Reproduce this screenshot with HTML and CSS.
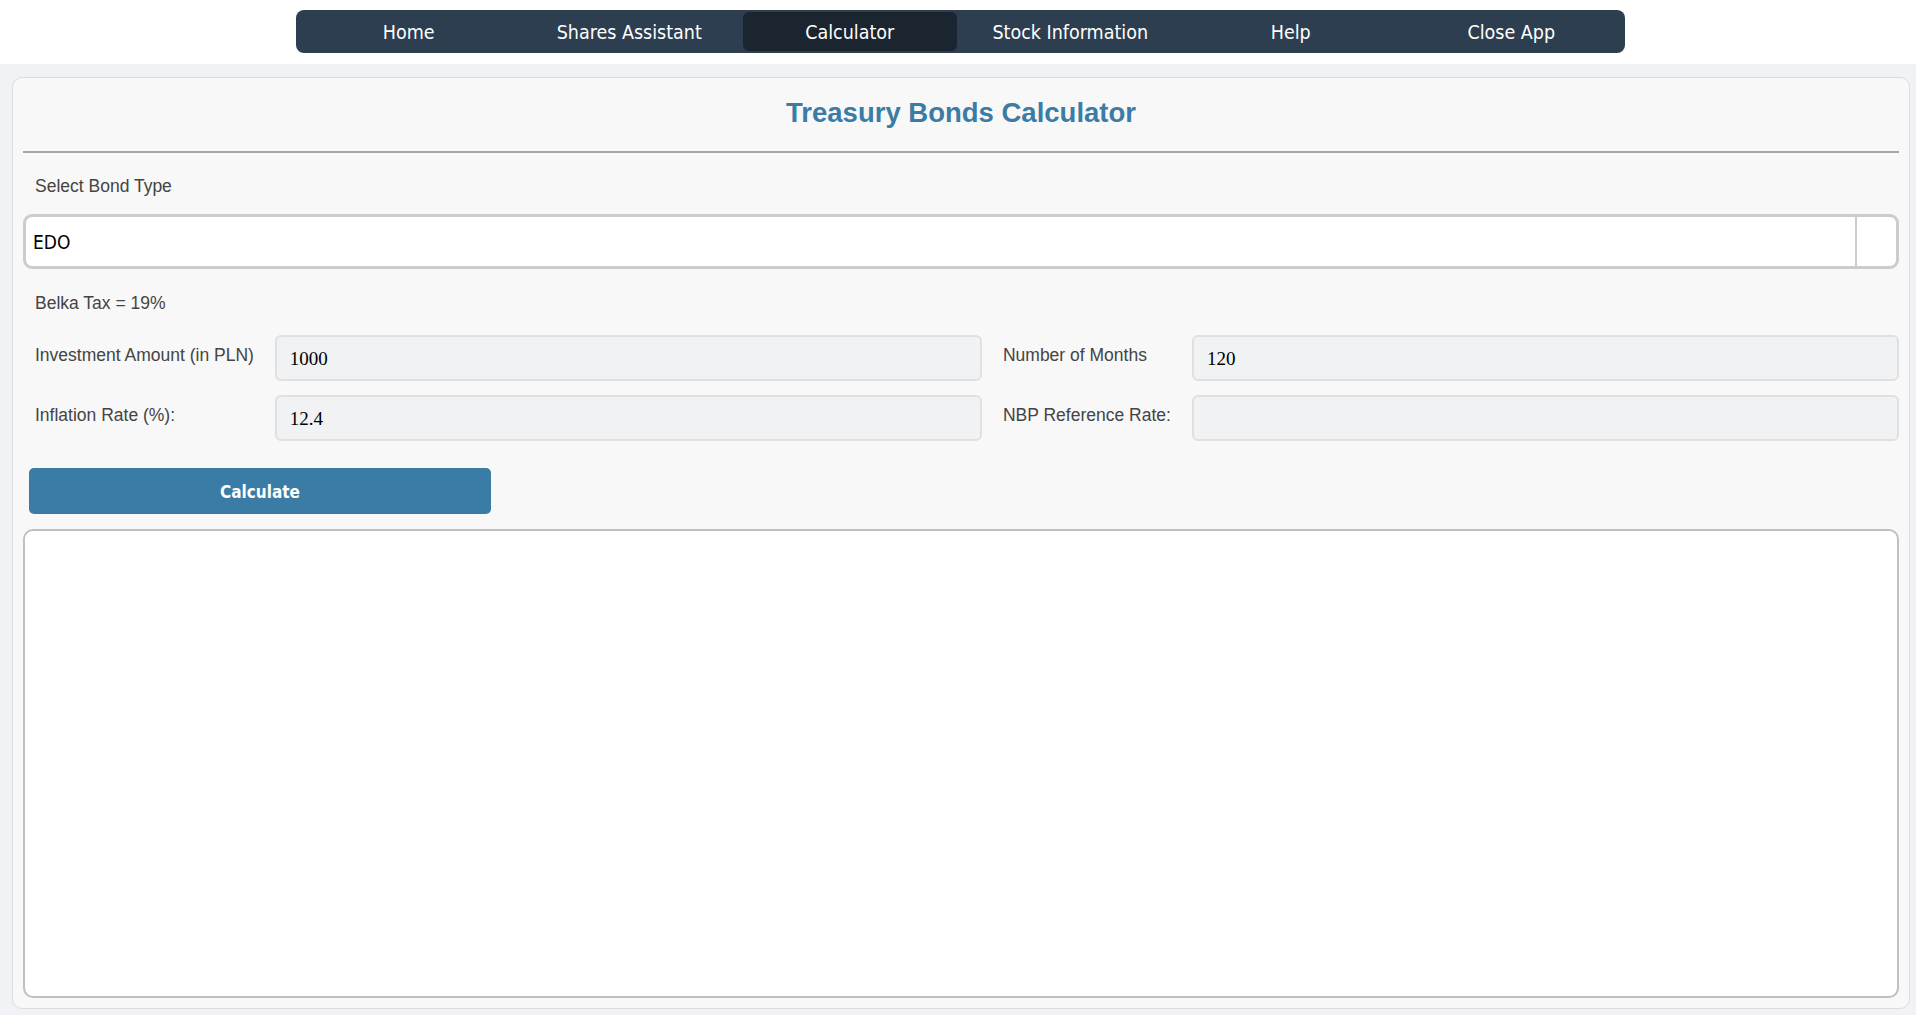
FILE: index.html
```html
<!DOCTYPE html>
<html lang="en">
<head>
<meta charset="utf-8">
<title>Treasury Bonds Calculator</title>
<link rel="stylesheet" href="styles.css">
</head>
<body>
<header class="topbar">
  <nav class="nav">
    <a class="nav-item" href="#">Home</a>
    <a class="nav-item" href="#">Shares Assistant</a>
    <a class="nav-item active" href="#">Calculator</a>
    <a class="nav-item" href="#">Stock Information</a>
    <a class="nav-item" href="#">Help</a>
    <a class="nav-item" href="#">Close App</a>
  </nav>
</header>
<main class="main">
  <section class="panel">
    <h1 class="title">Treasury Bonds Calculator</h1>
    <hr class="divider">
    <div class="label select-label">Select Bond Type</div>
    <div class="select">
      <span class="select-value">EDO</span>
      <span class="select-arrow"></span>
    </div>
    <div class="label tax">Belka Tax = 19%</div>
    <div class="form-grid">
      <label class="label field-label">Investment Amount (in PLN)</label>
      <div class="input">1000</div>
      <label class="label field-label">Number of Months</label>
      <div class="input">120</div>
      <label class="label field-label">Inflation Rate (%):</label>
      <div class="input">12.4</div>
      <label class="label field-label">NBP Reference Rate:</label>
      <div class="input"></div>
    </div>
    <button class="btn">Calculate</button>
    <div class="output"></div>
  </section>
</main>
</body>
</html>
```
FILE: styles.css
```css
html, body {
  margin: 0;
  padding: 0;
}
body {
  background: #f0f2f5;
  font-family: "Liberation Sans", Arial, sans-serif;
  height: 1015px;
  overflow: hidden;
}
.topbar {
  background: #ffffff;
  height: 64px;
  padding: 10px 0 0 4px;
  box-sizing: border-box;
}
.nav {
  width: 1329px;
  height: 43px;
  margin: 0 auto;
  background: #2c3e50;
  border-radius: 8px;
  display: flex;
  padding: 2px 3px;
  box-sizing: border-box;
}
.nav-item {
  flex: 1;
  display: flex;
  align-items: center;
  justify-content: center;
  color: #ffffff;
  text-decoration: none;
  font-family: "DejaVu Sans Condensed", "DejaVu Sans", sans-serif;
  font-size: 19.5px;
  border-radius: 6px;
  margin: 0 3px;
  padding-top: 2px;
}
.nav-item.active {
  background: #1b252f;
}
.main {
  padding: 13px 6px 0 12px;
}
.panel {
  background: #f8f8f8;
  border: 1px solid #dcdcdc;
  border-radius: 10px;
  padding: 0 10px;
  height: 932px;
  box-sizing: border-box;
}
.title {
  margin: 0;
  height: 73px;
  display: flex;
  align-items: center;
  justify-content: center;
  color: #3a7ca5;
  font-size: 27.5px;
  font-weight: bold;
  padding-bottom: 3px;
  box-sizing: border-box;
}
.divider {
  margin: 0;
  border: 0;
  height: 2px;
  background: #a6a6a6;
}
.label {
  color: #444;
  font-size: 17.5px;
}
.select-label {
  padding: 23px 0 0 12px;
  box-sizing: border-box;
  height: 61px;
}
.select {
  height: 55px;
  box-sizing: border-box;
  border: 3px solid #cccccc;
  border-radius: 9px;
  background: #ffffff;
  display: flex;
  align-items: center;
}
.select-value {
  flex: 1;
  padding-left: 7px;
  font-family: "DejaVu Sans Condensed", "DejaVu Sans", sans-serif;
  font-size: 19px;
  color: #000;
}
.select-arrow {
  width: 39px;
  height: 100%;
  border-left: 2px solid #cccccc;
}
.tax {
  padding: 24px 0 0 12px;
  height: 66px;
  box-sizing: border-box;
}
.form-grid {
  display: grid;
  grid-template-columns: auto 1fr auto 1fr;
  column-gap: 21px;
  row-gap: 14px;
  padding-left: 12px;
}
.field-label {
  padding-top: 10px;
}
.input {
  height: 46px;
  box-sizing: border-box;
  background: #f1f2f4;
  border: 2px solid #dfe0e2;
  border-radius: 6px;
  padding-left: 13px;
  display: flex;
  align-items: center;
  font-family: "Liberation Serif", "Times New Roman", serif;
  font-size: 19px;
  color: #000;
  padding-top: 2px;
}
.btn {
  display: block;
  margin: 27px 0 0 6px;
  width: 462px;
  height: 46px;
  background: #3a7ca5;
  color: #ffffff;
  border: 0;
  border-radius: 5px;
  font-family: "DejaVu Sans Condensed", "DejaVu Sans", sans-serif;
  font-weight: bold;
  font-size: 17px;
  padding-top: 2px;
}
.output {
  margin-top: 15px;
  height: 469px;
  box-sizing: border-box;
  background: #ffffff;
  border: 2px solid #c0c0c0;
  border-radius: 10px;
}
```
